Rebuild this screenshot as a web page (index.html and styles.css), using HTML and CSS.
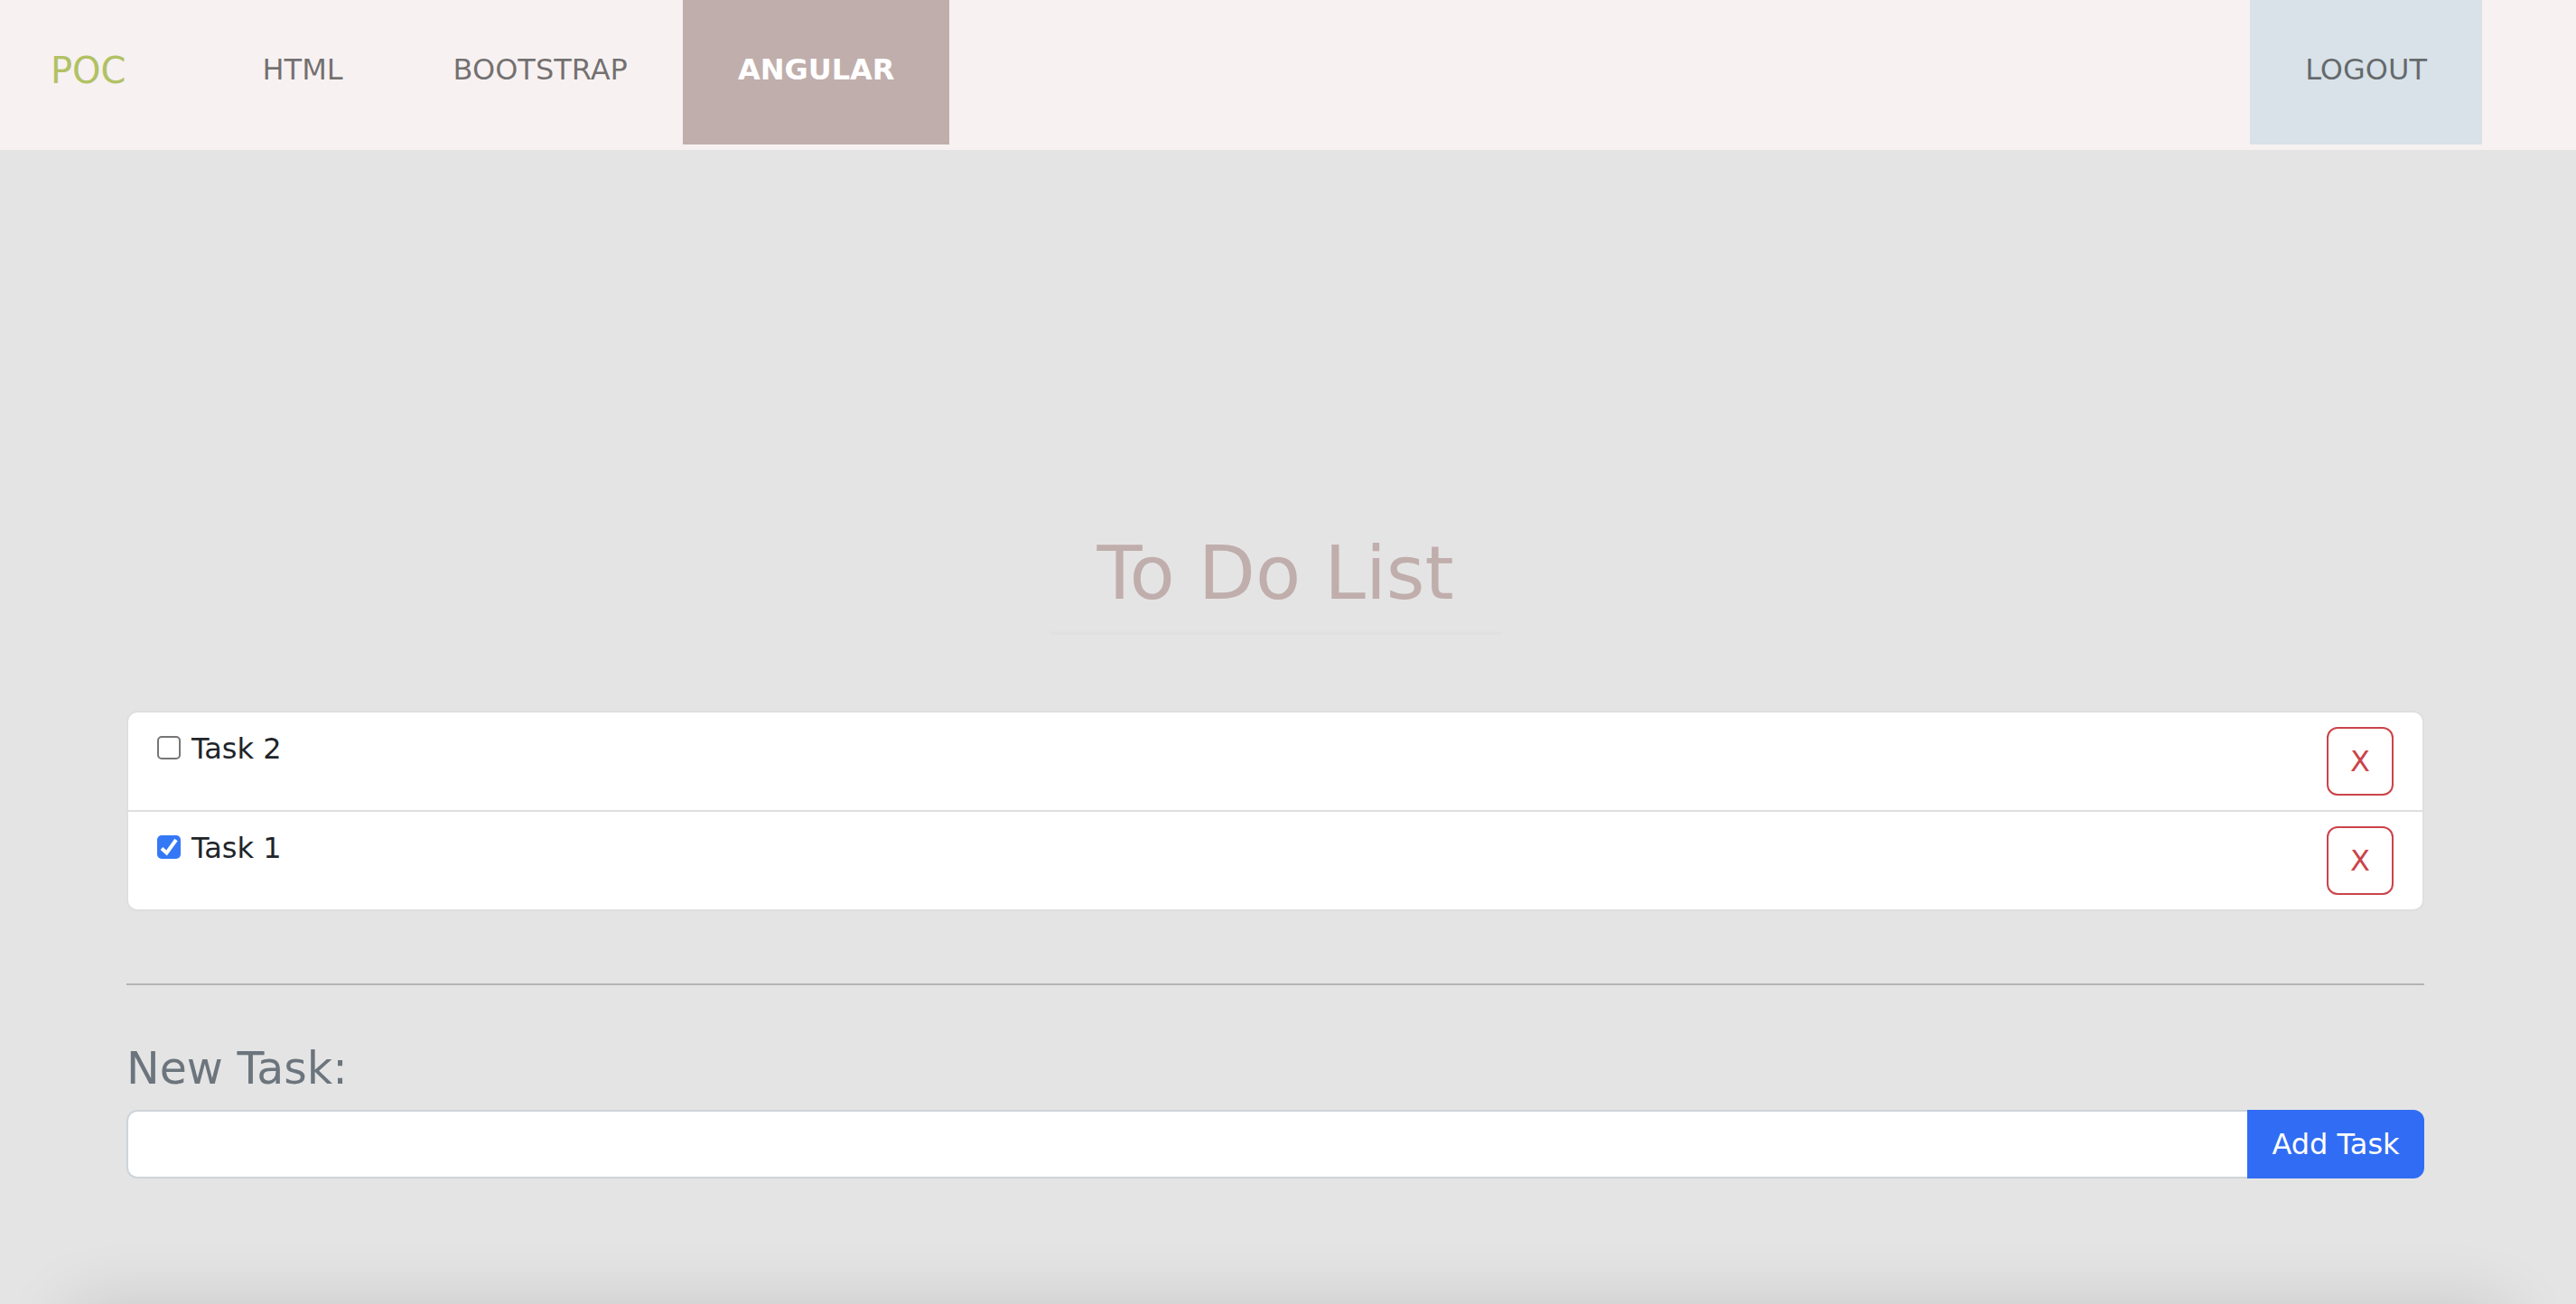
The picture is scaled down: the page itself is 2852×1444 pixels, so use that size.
FILE: index.html
```html
<!DOCTYPE html>
<html lang="en">
<head>
  <meta charset="utf-8">
  <meta name="viewport" content="width=device-width, initial-scale=1">
  <title>To Do List</title>
  <link rel="stylesheet" href="styles.css">
</head>
<body>
  <header class="site-header">
    <a class="brand" href="#">POC</a>
    <nav class="nav">
      <a class="nav-link" href="#">HTML</a>
      <a class="nav-link" href="#">BOOTSTRAP</a>
      <a class="nav-link nav-link-active" href="#" aria-current="page">ANGULAR</a>
    </nav>
    <a class="nav-link nav-link-logout" href="#">LOGOUT</a>
  </header>

  <main class="content">
    <h1 class="title">To Do List</h1>

    <ul class="task-list">
      <li class="task">
        <label class="task-label" for="task-2"><input class="task-check" type="checkbox" id="task-2">Task 2</label>
        <button class="button button-delete" type="button" aria-label="Delete Task 2">X</button>
      </li>
      <li class="task">
        <label class="task-label" for="task-1"><input class="task-check" type="checkbox" id="task-1" checked>Task 1</label>
        <button class="button button-delete" type="button" aria-label="Delete Task 1">X</button>
      </li>
    </ul>

    <hr class="divider">

    <form class="new-task">
      <label class="new-task-label" for="new-task">New Task:</label>
      <div class="input-group">
        <input class="new-task-input" type="text" id="new-task">
        <button class="button button-add" type="button">Add Task</button>
      </div>
    </form>
  </main>
</body>
</html>
```

FILE: styles.css
```css
*,
*::before,
*::after {
  box-sizing: border-box;
}

body {
  margin: 0;
  min-height: 100vh;
  background: #e4e4e4;
  color: #212529;
  font-family: Verdana, "DejaVu Sans", sans-serif;
  font-size: 32px;
  line-height: 48px;
}

/* Soft shade rising from the bottom edge of the window */
body::after {
  content: "";
  position: fixed;
  right: 80px;
  bottom: -208px;
  left: 80px;
  height: 200px;
  box-shadow: 0 0 80px rgba(0, 0, 0, 0.16);
  pointer-events: none;
}

.site-header {
  display: flex;
  align-items: flex-start;
  padding: 0 104px 6px 56px;
  background: #f7f1f1;
}

.brand {
  margin-right: 90px;
  padding: 48px 0;
  color: #b1c164;
  font-size: 40px;
  line-height: 60px;
  text-decoration: none;
}

.nav {
  display: flex;
  flex: 1;
}

.nav-link {
  padding: 53px 61px 59px;
  color: rgba(0, 0, 0, 0.55);
  text-decoration: none;
}

.nav-link-active {
  background: #c0aeac;
  color: #fff;
  font-weight: 700;
}

.nav-link-logout {
  background: #d8e2e8;
}

.content {
  display: flex;
  flex-direction: column;
  padding: 417px 168px 136px 140px;
}

.title {
  align-self: center;
  width: 500px;
  margin: 0 0 84px;
  padding-bottom: 12px;
  border-bottom: 4px solid #e1e1e1;
  color: #c0aeac;
  font-size: 82px;
  font-weight: 400;
  line-height: 104px;
  text-align: center;
}

.task-list {
  margin: 0;
  padding: 0;
  overflow: hidden;
  border: 2px solid #dfdfdf;
  border-radius: 12px;
  background: #fff;
  list-style: none;
}

.task {
  display: flex;
  align-items: flex-start;
  justify-content: space-between;
  padding: 16px 32px;
}

.task + .task {
  border-top: 2px solid #dfdfdf;
}

.task-label {
  display: flex;
  align-items: flex-start;
  gap: 12px;
}

.task-check {
  appearance: none;
  width: 26px;
  height: 26px;
  margin: 10px 0 0;
  border: 2px solid #767676;
  border-radius: 5px;
  background: #fff;
}

.task-check:checked {
  border: 0;
  background: #3478f6 url("data:image/svg+xml,%3Csvg xmlns='http://www.w3.org/2000/svg' viewBox='0 0 26 26'%3E%3Cpath d='M5 14.5l5.5 5L21 5' fill='none' stroke='white' stroke-width='4'/%3E%3C/svg%3E") center / 26px 26px no-repeat;
}

.button {
  margin: 0;
  padding: 12px 24px;
  border: 2px solid;
  border-radius: 12px;
  font: inherit;
  cursor: pointer;
}

.button-delete {
  width: 74px;
  padding: 12px 0;
  border-color: #cb444a;
  background: #fff;
  color: #cb444a;
}

.divider {
  width: 100%;
  height: 2px;
  margin: 80px 0 64px;
  border: 0;
  background: #b3b3b3;
}

.new-task {
  display: flex;
  flex-direction: column;
  gap: 16px;
}

.new-task-label {
  color: #6c757d;
  font-size: 49px;
  line-height: 58px;
}

.input-group {
  display: flex;
}

.new-task-input {
  flex: 1;
  min-width: 0;
  padding: 12px 24px;
  border: 2px solid #ced4da;
  border-right: 0;
  border-radius: 12px 0 0 12px;
  background: #fff;
  color: inherit;
  font: inherit;
}

.button-add {
  min-width: 196px;
  border-color: #316cf4;
  border-radius: 0 12px 12px 0;
  background: #316cf4;
  color: #fff;
}
```
